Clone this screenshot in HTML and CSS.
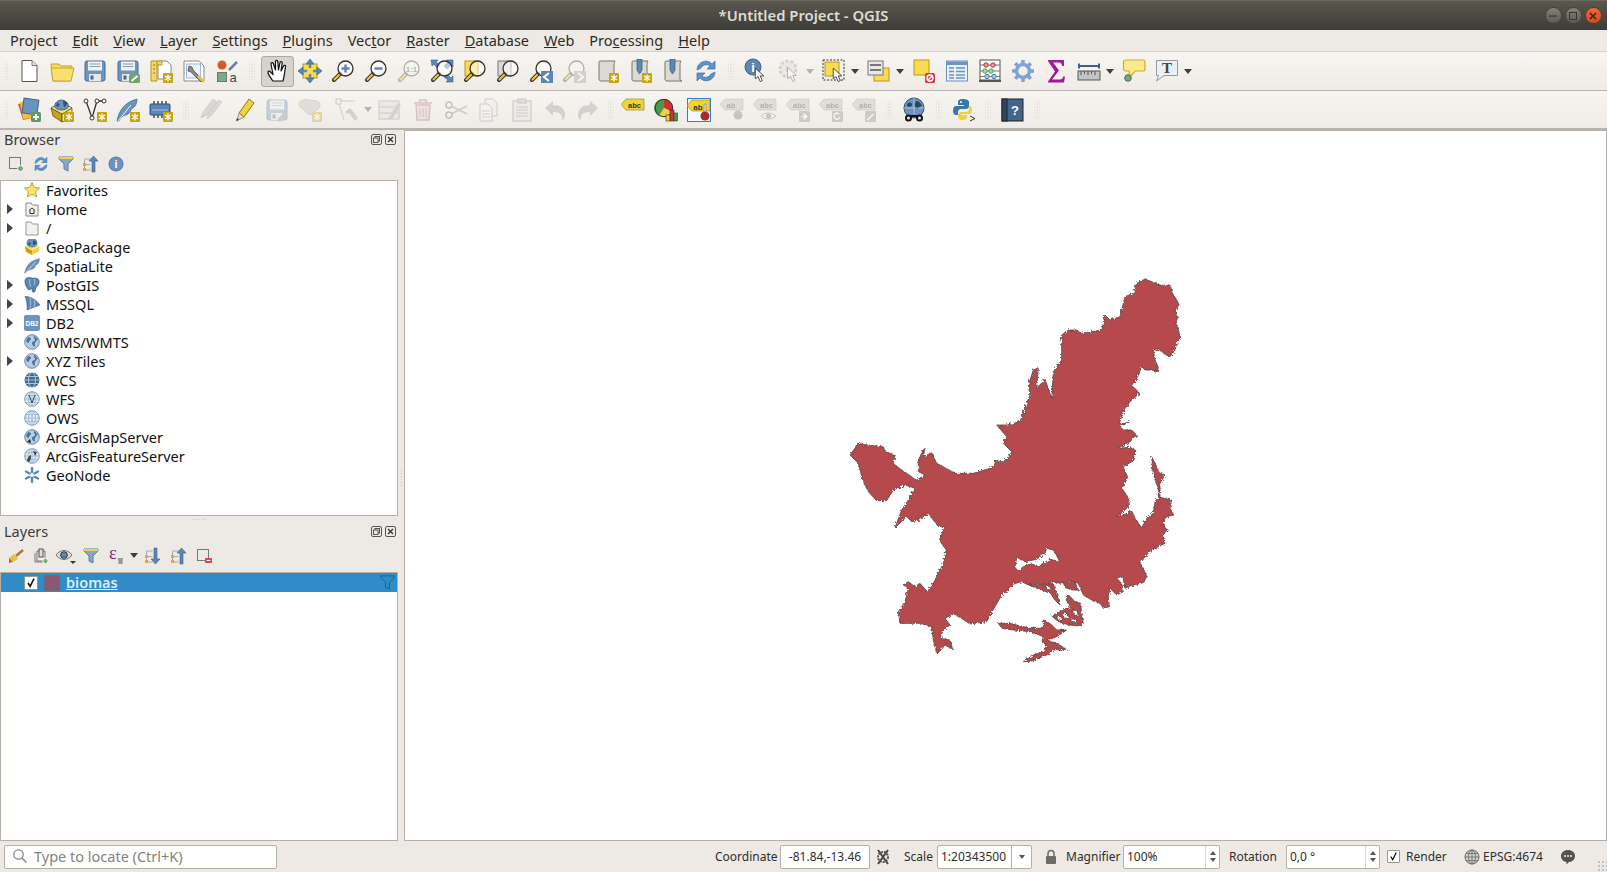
FILE: index.html
```html
<!DOCTYPE html>
<html lang="en">

<head>
  <title>*Untitled Project - QGIS</title>
  <meta charset="utf-8">
  <link rel="stylesheet" href="styles.css">
</head>

<body>
  <!-- shared icon parts -->
  <svg class="defs" width="0" height="0">
    <symbol id="mag" viewBox="0 0 24 24">
      <path d="M9 15l-6 6" stroke="#333" stroke-width="4" stroke-linecap="round" />
      <path d="M8 16l-4.500 4.500" stroke="#f0c82e" stroke-width="2.200" stroke-linecap="round" />
      <circle cx="14.500" cy="9.500" r="7.500" fill="#fff" fill-opacity=".55" stroke="#333" stroke-width="1.300" />
    </symbol>
    <symbol id="badge" viewBox="0 0 24 24">
      <rect x="14" y="14" width="10" height="10" rx="1" fill="#c9a411" />
      <path d="M19 15.500v7M16 17l6 4M22 17l-6 4" stroke="#fff" stroke-width="1.300" />
    </symbol>
    <symbol id="floppy" viewBox="0 0 24 24">
      <rect x="2" y="2" width="20" height="20" rx="2" fill="#6d95c2" stroke="#44688f" />
      <rect x="5" y="2.500" width="14" height="9" fill="#f2f2f2" />
      <path d="M6.500 5h11M6.500 7.500h11" stroke="#8a9db3" />
      <rect x="6" y="15" width="12" height="7" fill="#e8e8e8" />
      <rect x="7.500" y="16.500" width="3" height="4" fill="#44688f" />
    </symbol>
    <symbol id="scroll" viewBox="0 0 24 24">
      <path d="M5 2h15c-1 2-1 3-1 4v14c0 1 .500 2 2 2H6c-1.500 0-2-1-2-2V4c0-1 0-2 1-2z" fill="#dddad3" stroke="#77756f" />
    </symbol>
    <symbol id="pin" viewBox="0 0 24 24">
      <path d="M9 0h5v11l-2.500 4L9 11z" fill="#5f87b5" stroke="#3e5f86" stroke-width=".8" />
    </symbol>
    <symbol id="cursor" viewBox="0 0 24 24">
      <path d="M6 3v15l4-3 3 7 3-1.500-3-6.500h5z" fill="#fff" stroke="#333" stroke-width="1.200" stroke-linejoin="round" />
    </symbol>
    <symbol id="globe" viewBox="0 0 16 16">
      <circle cx="8" cy="8" r="7.300" fill="#b4cde6" stroke="#6a8bb0" stroke-width="1" />
      <path d="M4 3c2 0 3 1 3 2S5 6 5 8 3 8 2 7zM10 2c2 1 3 2 4 4-2 0-2 2-3 3s1 3-1 4c-1-2-2-2-2-4s3-1 3-3-2-2-1-4z" fill="#4f6f90" />
    </symbol>
    <symbol id="mesh" viewBox="0 0 16 16">
      <circle cx="8" cy="8" r="7.300" fill="#dbe7f3" stroke="#7d9cbd" />
      <path d="M.800 8h14.400M1.800 4.500h12.400M1.800 11.500h12.400M8 .800v14.400" stroke="#9bb7d4" stroke-width=".8" fill="none" />
      <ellipse cx="8" cy="8" rx="3.500" ry="7.200" fill="none" stroke="#9bb7d4" stroke-width=".8" />
    </symbol>
    <symbol id="tag" viewBox="0 0 24 24">
      <path d="M5 4h18v11H5L0 9.500z" fill="currentColor" stroke="#8a7a1a" stroke-width=".6" />
    </symbol>
  </svg>

  <div id="window">
    <header class="titlebar">
      <span class="title">*Untitled Project - QGIS</span>
      <div class="winbtns">
        <span class="winbtn"><svg width="16" height="16" viewBox="0 0 16 16"><path d="M4 8h8" stroke="#35342f" stroke-width="1.200" /></svg></span>
        <span class="winbtn"><svg width="16" height="16" viewBox="0 0 16 16"><rect x="4.500" y="4.500" width="7" height="7" fill="none" stroke="#35342f" /></svg></span>
        <span class="winbtn close"><svg width="16" height="16" viewBox="0 0 16 16"><path d="M5 5l6 6M11 5l-6 6" stroke="#3a1a0c" stroke-width="1.400" /></svg></span>
      </div>
    </header>

    <nav class="menubar">
      <span class="menu">Pro<u>j</u>ect</span>
      <span class="menu"><u>E</u>dit</span>
      <span class="menu"><u>V</u>iew</span>
      <span class="menu"><u>L</u>ayer</span>
      <span class="menu"><u>S</u>ettings</span>
      <span class="menu"><u>P</u>lugins</span>
      <span class="menu">Vec<u>t</u>or</span>
      <span class="menu"><u>R</u>aster</span>
      <span class="menu"><u>D</u>atabase</span>
      <span class="menu"><u>W</u>eb</span>
      <span class="menu">Pro<u>c</u>essing</span>
      <span class="menu"><u>H</u>elp</span>
    </nav>

    <div class="toolbar">
      <span class="handle first"></span>
      <span class="tb"><svg viewBox="0 0 24 24"><path d="M5 1.500h10l5 5v16H5z" fill="#fff" stroke="#555" /><path d="M15 1.500v5h5" fill="#e4e4e4" stroke="#777" /></svg></span>
      <span class="tb"><svg viewBox="0 0 24 24"><path d="M1 5h8l2 2h11l-2 15H3z" fill="#fadb5f" stroke="#c6a12f" /><path d="M1 9h23l-3 13H3z" fill="#fbdf6c" stroke="#c6a12f" /></svg></span>
      <span class="tb"><svg viewBox="0 0 24 24"><use href="#floppy" /></svg></span>
      <span class="tb"><svg viewBox="0 0 24 24"><use href="#floppy" /><rect x="13" y="15" width="11" height="9" rx="1.500" fill="#6fa56f" /><path d="M15.500 22l6-5" stroke="#fff" stroke-width="2" /></svg></span>
      <span class="tb"><svg viewBox="0 0 24 24"><path d="M9 2h9l4 4v14H9z" fill="#fff" stroke="#888" /><path d="M2 2h6v20H2z" fill="#f5d65f" stroke="#b8952b" /><path d="M8 2h5v4H8z" fill="#f5d65f" stroke="#b8952b" /><path d="M4 6h2M4 10h2M4 14h2" stroke="#8a7a1a" /><use href="#badge" /></svg></span>
      <span class="tb"><svg viewBox="0 0 24 24"><path d="M2 2h15l5 5v15H2z" fill="#fff" stroke="#888" /><rect x="4.500" y="5" width="14" height="14" fill="#eef3fa" stroke="#9db7d8" /><path d="M7 7l3 1 1 3 10 10-2 2L9 13l-3-1z" fill="#8a8a8a" stroke="#444" stroke-width=".7" /><path d="M16 17l6 6" stroke="#e6c42f" stroke-width="2.500" /></svg></span>
      <span class="tb"><svg viewBox="0 0 24 24"><circle cx="7" cy="6" r="4.500" fill="#d35a2a" /><path d="M14 11l8-8" stroke="#5b84b1" stroke-width="2.500" /><rect x="2.500" y="13.500" width="9" height="9" fill="#7fa98a" stroke="#5f7f6a" /><text class="glyph" x="14.500" y="23" font-size="13">a</text></svg></span>
      <span class="handle"></span>
      <span class="tb pressed"><svg viewBox="0 0 24 24"><path d="M7 22c-2-3-4-5-5-8-.500-1.500 1-2.500 2-1.500l3 3L5 5c-.300-1.500 1.800-2 2.300-.500L9.500 11 9.500 2.500c0-1.500 2.300-1.500 2.300 0L12.500 11l1.500-7.500c.300-1.500 2.400-1 2.200.500L15 12l2.500-5c.600-1.300 2.500-.600 2 .800C19 11 18.500 16 17 22z" fill="#fff" stroke="#111" stroke-width="1.200" stroke-linejoin="round" /></svg></span>
      <span class="tb"><svg viewBox="0 0 24 24"><rect x="5" y="5" width="14" height="14" fill="#f7dc4f" stroke="#b8952b" /><path d="M12 0l4 5H8zM12 24l-4-5h8zM0 12l5-4v8zM24 12l-5 4V8z" fill="#5b87b8" stroke="#3e5f86" stroke-width=".7" /><path d="M12 5v4M12 15v4M5 12h4M15 12h4" stroke="#5b87b8" stroke-width="2.500" /></svg></span>
      <span class="tb"><svg viewBox="0 0 24 24"><use href="#mag" /><path d="M14.500 5.500v8M10.500 9.500h8" stroke="#5b87b8" stroke-width="2.400" /></svg></span>
      <span class="tb"><svg viewBox="0 0 24 24"><use href="#mag" /><path d="M10.500 9.500h8" stroke="#5b87b8" stroke-width="2.400" /></svg></span>
      <span class="tb off"><svg viewBox="0 0 24 24"><use href="#mag" /><text class="glyph" x="14.500" y="12.500" font-size="8" text-anchor="middle" font-weight="700">1:1</text></svg></span>
      <span class="tb"><svg viewBox="0 0 24 24"><path d="M1 1h7L6 3l4 3-3 3-3-4-2 2zM23 1v7l-2-2-4 4-3-3 4-4-2-2zM23 23h-7l2-2-4-3 3-3 4 4 2-2z" fill="#5b87b8" stroke="#3e5f86" stroke-width=".6" /><use href="#mag" /></svg></span>
      <span class="tb"><svg viewBox="0 0 24 24"><rect x="2" y="2" width="13" height="15" fill="#f7dc4f" stroke="#b8952b" /><use href="#mag" /></svg></span>
      <span class="tb"><svg viewBox="0 0 24 24"><rect x="2" y="2" width="13" height="15" fill="#dddad3" stroke="#777" /><use href="#mag" /></svg></span>
      <span class="tb"><svg viewBox="0 0 24 24"><use href="#mag" /><rect x="12" y="12" width="12" height="12" fill="#5b87b8" /><path d="M20 14l-5 4 5 4" fill="none" stroke="#fff" stroke-width="2.200" /></svg></span>
      <span class="tb off"><svg viewBox="0 0 24 24"><use href="#mag" /><rect x="12" y="12" width="12" height="12" fill="#999" /><path d="M16 14l5 4-5 4" fill="none" stroke="#fff" stroke-width="2.200" /></svg></span>
      <span class="tb"><svg viewBox="0 0 24 24"><use href="#scroll" /><use href="#badge" /></svg></span>
      <span class="tb"><svg viewBox="0 0 24 24"><use href="#scroll" /><use href="#pin" /><use href="#badge" /></svg></span>
      <span class="tb"><svg viewBox="0 0 24 24"><use href="#scroll" /><use href="#pin" /></svg></span>
      <span class="tb"><svg viewBox="0 0 24 24"><path d="M3 11C3 5 9 1 14 2.500c2 .500 3 1.500 4 2.500l3-3v8h-8l3-3c-2-2-7-2-9 2zM21 13c0 6-6 10-11 8.500-2-.500-3-1.500-4-2.500l-3 3v-8h8l-3 3c2 2 7 2 9-2z" fill="#5b93cf" stroke="#3c6ea3" stroke-width=".7" /></svg></span>
      <span class="handle"></span>
      <span class="tb"><svg viewBox="0 0 24 24"><circle cx="9" cy="8" r="8" fill="#5b87b8" stroke="#40648c" /><text class="ilabel" x="9" y="13" font-size="13" text-anchor="middle">i</text><use href="#cursor" x="7" y="7" width="17" height="17" /></svg></span>
      <span class="tb drop off"><svg viewBox="0 0 24 24"><circle cx="11" cy="10" r="8" fill="#ddd" stroke="#999" stroke-width="3" stroke-dasharray="3 2" /><path d="M9 7l5 3-5 3z" fill="#999" /><use href="#cursor" x="6" y="6" width="18" height="18" /></svg><i class="tri"></i></span>
      <span class="tb drop"><svg viewBox="0 0 24 24"><rect x="1" y="1" width="21" height="20" fill="none" stroke="#333" stroke-dasharray="2 1.500" /><rect x="3" y="3" width="14" height="14" fill="#f7dc4f" stroke="#b8952b" /><use href="#cursor" x="7" y="7" width="17" height="17" /></svg><i class="tri"></i></span>
      <span class="tb drop"><svg viewBox="0 0 24 24"><rect x="7" y="9" width="15" height="13" fill="#f7dc4f" stroke="#b8952b" /><rect x="1" y="2" width="15" height="14" fill="#e8e8e8" stroke="#777" /><path d="M3 6h11M3 11h11" stroke="#777" stroke-width="2" /></svg><i class="tri"></i></span>
      <span class="tb"><svg viewBox="0 0 24 24"><rect x="2" y="1" width="15" height="15" fill="#f7dc4f" stroke="#b8952b" /><rect x="13" y="14" width="10" height="10" rx="1.500" fill="#d8404a" /><circle cx="18" cy="19" r="3" fill="none" stroke="#fff" stroke-width="1.300" /><path d="M16 21l4-4" stroke="#fff" stroke-width="1.300" /></svg></span>
      <span class="tb"><svg viewBox="0 0 24 24"><rect x="1.500" y="2" width="21" height="20" fill="#e8f0f8" stroke="#6c93bf" /><rect x="2" y="2.500" width="20" height="3.500" fill="#6c93bf" /><path d="M4 9h5M11 9h9M4 12.500h5M11 12.500h9M4 16h5M11 16h9M4 19h5M11 19h9" stroke="#6c93bf" stroke-width="1.300" /></svg></span>
      <span class="tb"><svg viewBox="0 0 24 24"><rect x="2" y="1" width="20" height="20" fill="#fff" stroke="#555" /><path d="M1 22h22" stroke="#555" stroke-width="2" /><path d="M2 6h20M2 12h20M2 17.500h20" stroke="#777" /><circle cx="8" cy="6" r="2.200" fill="#e3a0a0" stroke="#b33" /><circle cx="15" cy="6" r="2.200" fill="#e3a0a0" stroke="#b33" /><circle cx="7" cy="12" r="2.200" fill="#a9d4a9" stroke="#4a4" /><circle cx="13" cy="12" r="2.200" fill="#a9d4a9" stroke="#4a4" /><circle cx="9" cy="17.500" r="2.200" fill="#a9c6e4" stroke="#47a" /><circle cx="16" cy="17.500" r="2.200" fill="#a9c6e4" stroke="#47a" /></svg></span>
      <span class="tb"><svg viewBox="0 0 24 24"><circle cx="12" cy="12" r="6.500" fill="none" stroke="#7fa3d6" stroke-width="3.500" /><path d="M12 1v5M12 18v5M1 12h5M18 12h5M4.200 4.200l3.500 3.500M16.300 16.300l3.500 3.500M19.800 4.200l-3.500 3.500M7.700 16.300l-3.500 3.500" stroke="#7fa3d6" stroke-width="3.500" /></svg></span>
      <span class="tb"><svg viewBox="0 0 24 24"><path d="M4 1h16v6h-2c0-2-1-3.500-3-3.500H9l6 8-7 9h8c2 0 3-1 3-3h2l-1 6H4v-1l7-10L4 2z" fill="#a01a9c" /></svg></span>
      <span class="tb drop"><svg viewBox="0 0 24 24"><path d="M2 7h20M2 4.500v5M22 4.500v5" stroke="#3e5f86" stroke-width="2" /><rect x="1" y="12" width="22" height="9" fill="#c4c4c4" stroke="#555" /><path d="M4 12v4M7.500 12v3M11 12v4M14.500 12v3M18 12v4" stroke="#555" /></svg><i class="tri"></i></span>
      <span class="tb"><svg viewBox="0 0 24 24"><path d="M4 1h17c1.500 0 2 1 2 2v7c0 1.500-1 2-2 2h-8l-5 6-1-6H4c-1.500 0-2.500-1-2.500-2V3C1.500 2 2.500 1 4 1z" fill="#fbeb8e" stroke="#cfa92c" stroke-width="1.200" /><circle cx="6" cy="19" r="3.300" fill="#7aa67a" stroke="#4f6f4f" /></svg></span>
      <span class="tb drop"><svg viewBox="0 0 24 24"><path d="M1.500 1.500h21v15H9L1.500 22l2-5.500h-2z" fill="#eaf0f6" stroke="#9a9a9a" /><text class="tglyph" x="12" y="13.500" font-size="15" text-anchor="middle">T</text></svg><i class="tri"></i></span>
    </div>

    <div class="toolbar second">
      <span class="handle first"></span>
      <span class="tb"><svg viewBox="0 0 24 24"><path d="M1 6l9-2 5 16-9 2z" fill="#d8633a" /><path d="M3 4l9-1 3 17-9 1z" fill="#f1c232" /><rect x="6" y="1" width="15" height="15" fill="#6c93bf" stroke="#40648c" transform="rotate(8 13 8)" /><rect x="14" y="14" width="10" height="10" rx="1.500" fill="#5f9a6f" /><path d="M19 16v6M16 19h6" stroke="#fff" stroke-width="1.800" /></svg></span>
      <span class="tb"><svg viewBox="0 0 24 24"><path d="M1 10l11 6v8L3 18z" fill="#c9a411" stroke="#4a4010" stroke-width=".7" /><path d="M12 16l10-6v10l-10 4z" fill="#f2e27a" stroke="#4a4010" stroke-width=".7" /><path d="M1 10l11 6 10-6-5-3H6z" fill="#f4e48d" stroke="#4a4010" stroke-width=".7" /><path d="M4.500 9a7 7 0 1 1 14 0c-2 2-4 3-7 3s-5-1-7-3z" fill="#6c93bf" stroke="#40648c" /><path d="M7 5c3 0 3 2 2 3s-2 1-3 0zM13 3c2 0 4 1 5 3-2 0-2 2-3 3s-2-4-2-6z" fill="#34526f" /><use href="#badge" /></svg></span>
      <span class="tb"><svg viewBox="0 0 24 24"><path d="M3 3l6 17 5-17h7" fill="none" stroke="#333" stroke-width="1.300" /><circle cx="3" cy="3" r="2" fill="#fff" stroke="#333" /><circle cx="9" cy="20" r="2" fill="#fff" stroke="#333" /><circle cx="14" cy="3" r="2" fill="#fff" stroke="#333" /><circle cx="21" cy="3" r="2" fill="#fff" stroke="#333" /><use href="#badge" /></svg></span>
      <span class="tb"><svg viewBox="0 0 24 24"><path d="M1 23C3 12 9 4 21 1c0 6-3 9-6 10 0 3-3 6-6 6-2 1-4 2-6 6z" fill="#6c93bf" stroke="#40648c" stroke-width=".7" /><path d="M2 23L15 7" stroke="#e8eef5" /><use href="#badge" /></svg></span>
      <span class="tb"><svg viewBox="0 0 24 24"><rect x="1" y="6" width="20" height="11" rx="1" fill="#5b87b8" stroke="#2f4d70" /><path d="M5 3v3M9 3v3M13 3v3M17 3v3M5 17v3M9 17v3M13 17v3M17 17v3" stroke="#444" stroke-width="1.400" /><path d="M3 12h16" stroke="#a8c4e0" /><use href="#badge" /></svg></span>
      <span class="handle"></span>
      <span class="tb off"><svg viewBox="0 0 24 24"><path d="M2 20l2-6L14 1l4 3L8 17zM8 21l2-6L20 2l3 2-10 13z" fill="#aaa" stroke="#777" stroke-width=".6" /></svg></span>
      <span class="tb"><svg viewBox="0 0 24 24"><path d="M7 15L17 1l5 4L12 19z" fill="#f1d13f" stroke="#8b7a22" /><path d="M7 15l5 4-7 4z" fill="#eed9b5" stroke="#777" stroke-width=".7" /><path d="M5 20l2 1.500L4 23z" fill="#333" /></svg></span>
      <span class="tb off"><svg viewBox="0 0 24 24"><use href="#floppy" /><path d="M12 22l8-9 3 3-8 8z" fill="#888" /></svg></span>
      <span class="tb off"><svg viewBox="0 0 24 24"><path d="M1 6c0-4 5-5 10-4s11 0 11 5c0 4-4 5-6 8-2 2-6 2-8-1S1 10 1 6z" fill="#bbb" stroke="#999" /><use href="#badge" /></svg></span>
      <span class="tb drop wide off"><svg viewBox="0 0 24 24"><rect x="1" y="1" width="5" height="5" fill="none" stroke="#777" /><path d="M4 6l5 16M6 3h14" stroke="#888" /><path d="M11 13l4-3 2 2 6 8-3 3-6-8-3 1z" fill="#999" /></svg><i class="tri"></i></span>
      <span class="tb off"><svg viewBox="0 0 24 24"><rect x="1" y="3" width="20" height="18" fill="#ddd" stroke="#888" /><path d="M1 9h20M1 15h20" stroke="#888" /><path d="M10 21L20 5l3 2-9 14z" fill="#999" /></svg></span>
      <span class="tb off"><svg viewBox="0 0 24 24"><path d="M3 5h18M9 5V2h6v3" fill="none" stroke="#a86a6a" stroke-width="1.600" /><path d="M5 7h14l-1 15H6z" fill="#e0c8c8" stroke="#a86a6a" stroke-width="1.400" /><path d="M9 10v9M12 10v9M15 10v9" stroke="#a86a6a" /></svg></span>
      <span class="tb off"><svg viewBox="0 0 24 24"><circle cx="5" cy="7" r="3" fill="none" stroke="#666" stroke-width="1.500" /><circle cx="5" cy="17" r="3" fill="none" stroke="#666" stroke-width="1.500" /><path d="M7 8l16 8M7 16l16-8" stroke="#888" stroke-width="1.600" /></svg></span>
      <span class="tb off"><svg viewBox="0 0 24 24"><path d="M8 1h8l4 4v13H8z" fill="#eee" stroke="#888" /><path d="M3 6h8l4 4v13H3z" fill="#f6f6f6" stroke="#888" /><path d="M5 13h8M5 16h8M5 19h8" stroke="#999" /></svg></span>
      <span class="tb off"><svg viewBox="0 0 24 24"><rect x="3" y="3" width="18" height="20" fill="#e4e4e4" stroke="#777" /><rect x="8" y="1" width="8" height="4" fill="#bbb" stroke="#777" /><path d="M6 9h12M6 12h12M6 15h12M6 18h12" stroke="#888" /></svg></span>
      <span class="tb off"><svg viewBox="0 0 24 24"><path d="M2 10l8-7v4c8 0 12 4 12 10 0 2-1 4-3 5 1-6-3-8-9-8v4z" fill="#999" /></svg></span>
      <span class="tb off"><svg viewBox="0 0 24 24"><path d="M22 10l-8-7v4C6 7 2 11 2 17c0 2 1 4 3 5-1-6 3-8 9-8v4z" fill="#999" /></svg></span>
      <span class="handle narrow"></span>
      <span class="tb yellow"><svg viewBox="0 0 24 24"><use href="#tag" y="-3" /><text class="ilabel dark" x="13.500" y="10" font-size="7.500" text-anchor="middle" font-weight="700">abc</text></svg></span>
      <span class="tb"><svg viewBox="0 0 24 24"><path d="M10 10V1a9 9 0 0 1 8 13z" fill="#c9352c" /><path d="M10 10l8 4a9 9 0 0 1-13 4z" fill="#f1d13f" /><path d="M10 10L5 18A9 9 0 0 1 10 1z" fill="#4c9a4c" /><circle cx="10" cy="10" r="8.700" fill="none" stroke="#333" /><rect x="12" y="17" width="4" height="6" fill="#f1d13f" stroke="#333" stroke-width=".6" /><rect x="16" y="12" width="4" height="11" fill="#c9352c" stroke="#333" stroke-width=".6" /><rect x="20" y="15" width="3.500" height="8" fill="#4c9a4c" stroke="#333" stroke-width=".6" /></svg></span>
      <span class="tb yellow"><svg viewBox="0 0 24 24"><rect x=".5" y=".5" width="23" height="23" fill="#f4f8fc" stroke="#2f7fd6" /><use href="#tag" y="-2" /><text class="ilabel dark" x="11" y="11.500" font-size="8" text-anchor="middle" font-weight="700">ab</text><path d="M17 6h2v9h-2z" fill="#ddd" stroke="#777" stroke-width=".5" /><circle cx="18" cy="18" r="4.500" fill="#a82a2a" /></svg></span>
      <span class="tb off grey"><svg viewBox="0 0 24 24"><use href="#tag" y="-3" /><text class="ilabel dark" x="11" y="10" font-size="7.500" text-anchor="middle">ab</text><path d="M17 4h2v9h-2z" fill="#ddd" stroke="#777" stroke-width=".5" /><circle cx="18" cy="17" r="4.500" fill="#777" /></svg></span>
      <span class="tb off grey"><svg viewBox="0 0 24 24"><use href="#tag" y="-3" /><text class="ilabel dark" x="13.500" y="10" font-size="7.500" text-anchor="middle">abc</text><path d="M8 18c3-4 11-4 15 0-4 4-12 4-15 0z" fill="#eee" stroke="#777" /><circle cx="15.500" cy="18" r="2.500" fill="#777" /></svg></span>
      <span class="tb off grey"><svg viewBox="0 0 24 24"><use href="#tag" y="-3" /><text class="ilabel dark" x="13.500" y="10" font-size="7.500" text-anchor="middle">abc</text><rect x="13" y="13" width="11" height="11" rx="1" fill="#888" /><path d="M15 18.500h4M18 15.500l3.500 3-3.500 3z" stroke="#fff" fill="#fff" /></svg></span>
      <span class="tb off grey"><svg viewBox="0 0 24 24"><use href="#tag" y="-3" /><text class="ilabel dark" x="13.500" y="10" font-size="7.500" text-anchor="middle">abc</text><rect x="13" y="13" width="11" height="11" rx="1" fill="#888" /><path d="M21 18.500a3 3 0 1 1-1-2.500" stroke="#fff" fill="none" stroke-width="1.400" /></svg></span>
      <span class="tb off grey"><svg viewBox="0 0 24 24"><use href="#tag" y="-3" /><text class="ilabel dark" x="13.500" y="10" font-size="7.500" text-anchor="middle">abc</text><rect x="13" y="13" width="11" height="11" rx="1" fill="#888" /><path d="M15.500 22l6-6" stroke="#fff" stroke-width="1.600" /></svg></span>
      <span class="handle"></span>
      <span class="tb"><svg viewBox="0 0 24 24"><circle cx="12" cy="10" r="10" fill="#6c93bf" stroke="#33506e" /><path d="M5 6c3-3 5-1 5 1s-3 2-5 1zM14 3c3 0 5 2 6 5-3 0-3 3-5 3s-3-5-1-8z" fill="#2d4763" /><path d="M2 10h20M12 0v16" stroke="#c5d6e8" stroke-width=".7" /><path d="M9 18h6" stroke="#111" stroke-width="2" /><circle cx="6.500" cy="20" r="3.500" fill="#111" /><circle cx="17.500" cy="20" r="3.500" fill="#111" /><circle cx="6.500" cy="20" r="1.500" fill="#e9e9e9" /><circle cx="17.500" cy="20" r="1.500" fill="#e9e9e9" /></svg></span>
      <span class="handle"></span>
      <span class="tb"><svg viewBox="0 0 24 24"><path d="M11 1c-4 0-5 1.500-5 3v3h6v1H4C2 8 1 10 1 12.500S2 17 4 17h2v-3c0-2 1.500-3 3-3h5c1.500 0 3-1 3-3V4c0-2-3-3-6-3z" fill="#3a76a8" /><path d="M10 22c4 0 5-1.500 5-3v-2H9v-1h8c2 0 3-2 3-4.500S19 8 17.500 8H17v3c0 2-1.500 3-3 3H9c-1.500 0-3 1-3 3v2c0 2 2 3 4 3z" fill="#f2d23c" /><circle cx="9" cy="4" r="1" fill="#fff" /><path d="M18 18l5 2.500-5 2.500" fill="none" stroke="#333" /></svg></span>
      <span class="handle tight"></span>
      <span class="tb"><svg viewBox="0 0 24 24"><rect x="2" y="1" width="21" height="22" fill="#42658c" stroke="#222" /><rect x="2" y="1" width="5" height="22" fill="#2c4766" stroke="#222" /><text class="ilabel" x="15" y="17" font-size="13" text-anchor="middle" font-weight="400">?</text></svg></span>
      <span class="handle"></span>
    </div>

    <div class="main">
      <aside class="side">
        <section class="panel browser">
          <div class="dock-title">
            <span>Browser</span>
            <span class="dock-btns">
              <svg viewBox="0 0 11 11"><rect x=".5" y=".5" width="10" height="10" rx="1.500" fill="none" stroke="#555" /><rect x="4" y="2.500" width="4.500" height="4.500" fill="none" stroke="#555" /><rect x="2.500" y="4" width="4.500" height="4.500" fill="#edeae5" stroke="#555" /></svg>
              <svg viewBox="0 0 11 11"><rect x=".5" y=".5" width="10" height="10" rx="1.500" fill="none" stroke="#555" /><path d="M3 3l5 5M8 3l-5 5" stroke="#333" stroke-width="1.400" /></svg>
            </span>
          </div>
          <div class="dock-tools">
            <span class="dt"><svg viewBox="0 0 16 16"><rect x="1.500" y="1.500" width="11" height="11" fill="none" stroke="#777" /><circle cx="12.500" cy="12.500" r="3" fill="#74ab74" stroke="#fff" /></svg></span>
            <span class="dt"><svg viewBox="0 0 24 24"><path d="M3 11C3 5 9 1 14 2.500c2 .500 3 1.500 4 2.500l3-3v8h-8l3-3c-2-2-7-2-9 2zM21 13c0 6-6 10-11 8.500-2-.500-3-1.500-4-2.500l-3 3v-8h8l-3 3c2 2 7 2 9-2z" fill="#5b93cf" stroke="#3c6ea3" stroke-width=".7" /></svg></span>
            <span class="dt"><svg viewBox="0 0 16 16"><path d="M1 1h14v2L10 8v7l-4-2V8L1 3z" fill="#88a6c6" stroke="#5f7fa6" /><path d="M1 1h14v2H1z" fill="#f1d13f" /></svg></span>
            <span class="dt"><svg viewBox="0 0 16 16"><path d="M1.500 3h6M1.500 3v11h6M1.500 8.500h6" fill="none" stroke="#aaa" /><rect x="0" y="7" width="3" height="3" fill="#e8a33a" /><rect x="0" y="12" width="3" height="3" fill="#e8a33a" /><path d="M10.500 0l4.500 5h-3v11h-3V5H6z" fill="#5b87b8" stroke="#3e5f86" stroke-width=".6" /></svg></span>
            <span class="dt"><svg viewBox="0 0 16 16"><circle cx="8" cy="8" r="7" fill="#6c93bf" stroke="#4d739c" /><text class="ilabel" x="8" y="12" font-size="11" text-anchor="middle">i</text></svg></span>
          </div>
          <div class="tree">
            <div class="row"><i class="arrow none"></i><svg class="ti" viewBox="0 0 16 16"><path d="M8 .500l2.300 5 5.200.600-3.900 3.500 1.100 5.400L8 12.200 3.300 15l1.100-5.400L.500 6.100l5.200-.600z" fill="#fbe56f" stroke="#b8a33a" /></svg><span>Favorites</span></div>
            <div class="row"><i class="arrow"></i><svg class="ti" viewBox="0 0 16 16"><path d="M2 2h5l1.500 2H14v11H2z" fill="#f2f1ee" stroke="#888" /><path d="M5 9.500L8 7l3 2.500M6 9v3.500h4V9" fill="none" stroke="#333" /></svg><span>Home</span></div>
            <div class="row"><i class="arrow"></i><svg class="ti" viewBox="0 0 16 16"><path d="M2 2h5l1.500 2H14v11H2z" fill="#f2f1ee" stroke="#999" /></svg><span>/</span></div>
            <div class="row"><i class="arrow none"></i><svg class="ti" viewBox="0 0 24 24"><path d="M1 11l11 6v7L3 19z" fill="#c9a411" /><path d="M12 17l11-6v7l-11 6z" fill="#f2d23c" /><path d="M1 11l11 6 11-6-6-4H7z" fill="#f4e48d" /><path d="M5 9a7.500 7.500 0 1 1 14 0c-2 2-4 3-7 3s-5-1-7-3z" fill="#6c93bf" stroke="#40648c" /><path d="M8 5c3 0 2 3 1 4s-3 0-3-1zM14 2c2 1 4 2 5 4-2 0-2 3-4 3s-2-4-1-7z" fill="#34526f" /></svg><span>GeoPackage</span></div>
            <div class="row"><i class="arrow none"></i><svg class="ti" viewBox="0 0 24 24"><path d="M1 23C3 12 9 4 23 1c0 6-3 9-6 10 0 3-3 6-6 6-3 1-6 2-10 6z" fill="#6c93bf" stroke="#40648c" stroke-width=".7" /><path d="M2 23L17 6" stroke="#e8eef5" /></svg><span>SpatiaLite</span></div>
            <div class="row"><i class="arrow"></i><svg class="ti" viewBox="0 0 16 16"><path d="M1 4c0-3 3-4 6-3l2 .500c3-1 6 0 6 3 0 2-1 4-2 5l-1 .500c-1 1 0 4-2 5s-2-2-2-4c-2 1-3 3-4 1S1 8 1 4z" fill="#5b87b8" stroke="#2f4d70" stroke-width=".8" /><path d="M6 2c-1 3 0 6 1 8M10 2c1 2 1 4 0 6" fill="none" stroke="#c5d6e8" stroke-width=".7" /></svg><span>PostGIS</span></div>
            <div class="row"><i class="arrow"></i><svg class="ti" viewBox="0 0 16 16"><path d="M1 0c5 1 11 3 15 9-4 2-9 3-13 5 .500-5-.500-10-2-14z" fill="#5b87b8" stroke="#40648c" stroke-width=".6" /><path d="M6 2c1 3 1 7 0 10M10 4c1 2 1 5 0 7" stroke="#a9c6e4" fill="none" /></svg><span>MSSQL</span></div>
            <div class="row"><i class="arrow"></i><svg class="ti" viewBox="0 0 16 16"><rect width="16" height="16" rx="2" fill="#6c93bf" /><text class="ilabel" x="8" y="10.500" font-size="6.500" text-anchor="middle" font-weight="400">DB2</text></svg><span>DB2</span></div>
            <div class="row"><i class="arrow none"></i><svg class="ti" viewBox="0 0 16 16"><use href="#globe" /></svg><span>WMS/WMTS</span></div>
            <div class="row"><i class="arrow"></i><svg class="ti" viewBox="0 0 16 16"><use href="#globe" /></svg><span>XYZ Tiles</span></div>
            <div class="row"><i class="arrow none"></i><svg class="ti" viewBox="0 0 16 16"><circle cx="8" cy="8" r="7.500" fill="#44688f" /><path d="M.500 8h15M1.500 4.500h13M1.500 11.500h13" stroke="#c5d6e8" stroke-width=".8" /><ellipse cx="8" cy="8" rx="3.500" ry="7.500" fill="none" stroke="#c5d6e8" stroke-width=".8" /></svg><span>WCS</span></div>
            <div class="row"><i class="arrow none"></i><svg class="ti" viewBox="0 0 16 16"><use href="#mesh" /><path d="M5 4l3 8 3-8" fill="none" stroke="#444" /></svg><span>WFS</span></div>
            <div class="row"><i class="arrow none"></i><svg class="ti" viewBox="0 0 16 16"><use href="#mesh" /></svg><span>OWS</span></div>
            <div class="row"><i class="arrow none"></i><svg class="ti" viewBox="0 0 16 16"><use href="#globe" /><path d="M3 13l3-3 1 4z" fill="#222" /></svg><span>ArcGisMapServer</span></div>
            <div class="row"><i class="arrow none"></i><svg class="ti" viewBox="0 0 16 16"><use href="#mesh" /><path d="M3 13c1-4 2-5 4-6 0 3 0 5-2 7zM9 3l4 1-2 4z" fill="#444" /></svg><span>ArcGisFeatureServer</span></div>
            <div class="row"><i class="arrow none"></i><svg class="ti" viewBox="0 0 16 16"><path d="M8 1v14M2 4.500l12 7M14 4.500l-12 7" stroke="#5b87b8" stroke-width="2.400" stroke-linecap="round" /><circle cx="8" cy="8" r="2" fill="#fff" /></svg><span>GeoNode</span></div>
          </div>
        </section>

        <div class="splitter"></div>

        <section class="panel layers">
          <div class="dock-title">
            <span>Layers</span>
            <span class="dock-btns">
              <svg viewBox="0 0 11 11"><rect x=".5" y=".5" width="10" height="10" rx="1.500" fill="none" stroke="#555" /><rect x="4" y="2.500" width="4.500" height="4.500" fill="none" stroke="#555" /><rect x="2.500" y="4" width="4.500" height="4.500" fill="#edeae5" stroke="#555" /></svg>
              <svg viewBox="0 0 11 11"><rect x=".5" y=".5" width="10" height="10" rx="1.500" fill="none" stroke="#555" /><path d="M3 3l5 5M8 3l-5 5" stroke="#333" stroke-width="1.400" /></svg>
            </span>
          </div>
          <div class="dock-tools">
            <span class="dt"><svg viewBox="0 0 16 16"><path d="M1 10l5-4 4 5-5 3z" fill="#e4c53a" /><path d="M1 10l4 4-4 1z" fill="#d8534a" /><path d="M8 8l7-6" stroke="#a8793a" stroke-width="2.500" /></svg></span>
            <span class="dt"><svg viewBox="0 0 16 16"><path d="M4 3h8v10H4z" fill="#eee" stroke="#777" /><rect x="6" y="1" width="4" height="8" fill="#ddd" stroke="#555" /><path d="M2 5v9h8" fill="none" stroke="#777" /><circle cx="12.500" cy="13" r="2.700" fill="#74ab74" stroke="#fff" /></svg></span>
            <span class="dt eye"><svg viewBox="0 0 20 16"><path d="M0 7c4-6 12-6 16 0-4 6-12 6-16 0z" fill="#d9d9d9" stroke="#777" /><circle cx="8" cy="7" r="3.300" fill="#5b87b8" stroke="#333" /><path d="M14 13h6l-3 3z" fill="#333" /></svg></span>
            <span class="dt"><svg viewBox="0 0 16 16"><path d="M1 1h14v2L10 8v7l-4-2V8L1 3z" fill="#88a6c6" stroke="#5f7fa6" /><path d="M1 1h14v2H1z" fill="#f1d13f" /></svg></span>
            <span class="dt drop"><svg viewBox="0 0 16 16"><text class="eps" x="0" y="11" font-size="18">&#949;</text><path d="M9 10h5l-.500 6h-4z" fill="#999" /></svg><i class="tri"></i></span>
            <span class="dt"><svg viewBox="0 0 16 16"><path d="M1.500 3h6M1.500 3v11h6M1.500 8.500h6" fill="none" stroke="#aaa" /><rect x="0" y="7" width="3" height="3" fill="#e8a33a" /><rect x="0" y="12" width="3" height="3" fill="#e8a33a" /><path d="M10.500 16L15 11h-3V0H9v11H6z" fill="#5b87b8" stroke="#3e5f86" stroke-width=".6" /></svg></span>
            <span class="dt"><svg viewBox="0 0 16 16"><path d="M1.500 3h6M1.500 3v11h6M1.500 8.500h6" fill="none" stroke="#aaa" /><rect x="0" y="7" width="3" height="3" fill="#e8a33a" /><rect x="0" y="12" width="3" height="3" fill="#e8a33a" /><path d="M10.500 0l4.500 5h-3v11h-3V5H6z" fill="#5b87b8" stroke="#3e5f86" stroke-width=".6" /></svg></span>
            <span class="dt"><svg viewBox="0 0 16 16"><rect x="1.500" y="1.500" width="11" height="11" fill="none" stroke="#777" /><rect x="9" y="10" width="7" height="5" rx="1" fill="#d8404a" /><path d="M10.500 12.500h4" stroke="#fff" stroke-width="1.200" /></svg></span>
          </div>
          <div class="tree layertree">
            <div class="layer">
              <span class="check"><svg viewBox="0 0 14 14"><path d="M3.500 7l2.500 4 4.500-9" fill="none" stroke="#111" stroke-width="1.800" /></svg></span>
              <span class="swatch"></span>
              <span class="lname">biomas</span>
              <svg class="lfilter" viewBox="0 0 16 16"><path d="M1 1h14v2L10 8v7l-4-2V8L1 3z" fill="none" stroke="#1c5f8e" /></svg>
            </div>
          </div>
        </section>
      </aside>

      <div class="vsplit"></div>

      <div class="canvas">
        <svg class="map" viewBox="0 0 1110 1260">
          <defs>
            <filter id="rough" x="-5%" y="-5%" width="110%" height="110%">
              <feTurbulence type="fractalNoise" baseFrequency=".16" numOctaves="2" seed="4" />
              <feDisplacementMap in="SourceGraphic" scale="13" />
            </filter>
          </defs>
          <g filter="url(#rough)" fill="#b5484c" stroke="#4b4648" stroke-width="2.400" fill-rule="evenodd">
            <path d="M945 57L965 65 990 75 1022 77 1025 95 1040 120 1048 135 1035 150 1043 170 1038 190 1045 210 1052 228 1042 245 1035 270 1020 290 1005 283 990 270 970 270 975 300 985 322 982 335 965 330 945 330 935 320 925 345 915 365 902 375 915 385 928 400 915 412 900 425 885 445 875 470 868 490 885 490 900 485 870 500 880 510 905 510 920 525 900 545 880 555 865 565 900 562 918 570 912 590 905 605 880 620 885 635 893 650 885 670 875 685 890 705 900 725 890 745 862 770 880 765 905 752 915 775 935 803 950 775 970 760 975 725 985 712 985 685 975 660 968 630 965 590 975 610 985 635 1005 645 990 670 990 712 1025 720 1020 745 1032 765 1010 770 998 785 1005 805 1012 808 1000 825 1005 850 985 860 965 868 950 885 930 910 945 935 950 950 940 968 900 978 885 985 878 948 860 955 875 970 880 995 860 1005 840 985 835 1010 838 1040 820 1045 810 1030 780 1018 760 1005 745 970 720 962 690 970 670 965 650 975 620 970 595 975 575 965 550 972 540 985 515 1005 495 1040 470 1085 420 1092 395 1075 370 1062 345 1075 360 1095 340 1110 330 1135 360 1140 368 1168 345 1155 322 1182 310 1140 305 1100 270 1090 210 1090 205 1055 225 1025 235 985 220 975 235 965 255 980 270 970 292 995 315 960 340 910 348 870 328 840 345 800 325 800 295 760 270 780 245 785 230 770 195 803 215 750 235 720 255 685 225 675 190 690 170 722 140 722 115 695 100 665 90 630 85 610 60 585 85 550 110 555 160 560 165 575 195 585 190 610 215 630 245 650 260 660 285 645 265 635 265 600 280 570 285 565 280 590 305 578 320 610 340 620 375 640 430 640 480 625 505 600 490 605 520 605 535 590 545 575 520 550 530 530 500 495 530 495 570 485 590 430 600 405 595 375 610 330 625 325 620 385 645 358 665 415 670 335 695 300 695 225 715 210 740 210 755 220 815 210 825 165 840 180 870 170 885 110 910 100 920 70z
              M560 892L585 905 620 898 645 880 650 865 670 870 690 905 660 898 640 910 620 920 605 910 580 920 565 932 555 925z" />
            <path d="M505 1090L540 1090 600 1105 640 1105 640 1080 660 1090 680 1110 710 1110 680 1130 650 1140 680 1150 710 1168 670 1170 650 1185 600 1205 580 1205 610 1185 640 1175 650 1155 635 1145 640 1130 600 1115 550 1110 515 1105z" />
            <path d="M665 1068L700 1050 722 1042 708 1020 716 1005 735 1025 752 1030 756 1070 760 1090 745 1098 720 1095 690 1088z
              M698 1062L712 1058 716 1072 703 1076z M728 1050L742 1052 744 1066 731 1064z M722 1078L738 1076 740 1088 726 1088z M680 1072L692 1068 695 1080 684 1080z" />
            <path d="M595 975L640 972 670 972 680 1000 690 1035 675 1020 660 998 640 992 620 985z M645 980L660 980 664 990 650 988z" />
            <path d="M700 968L735 966 745 990 725 990 705 982z" />
          </g>
        </svg>
      </div>
    </div>

    <footer class="statusbar">
      <div class="locator">
        <svg viewBox="0 0 16 16"><circle cx="6.500" cy="6.500" r="4.700" fill="none" stroke="#888" stroke-width="1.300" /><path d="M10 10l4.500 4.500" stroke="#888" stroke-width="1.500" /></svg>
        <span>Type to locate (Ctrl+K)</span>
      </div>
      <span class="st lbl-coord">Coordinate</span>
      <span class="field coord">-81.84,-13.46</span>
      <svg class="sicon toggle" viewBox="0 0 16 16"><path d="M3 1l10 14M13 1L3 15" stroke="#444" stroke-width="2" /><circle cx="8" cy="8" r="5" fill="none" stroke="#555" stroke-width="2" stroke-dasharray="2 1" /></svg>
      <span class="st lbl-scale">Scale</span>
      <span class="field combo">1:20343500<i class="combo-btn"><i class="tri small"></i></i></span>
      <svg class="sicon lock" viewBox="0 0 16 16"><path d="M5 7V4.500a3 3 0 0 1 6 0V7" fill="none" stroke="#6d6b66" stroke-width="1.500" /><rect x="3" y="7" width="10" height="8" rx="1" fill="#6d6b66" /></svg>
      <span class="st lbl-mag">Magnifier</span>
      <span class="field spin mag">100%<i class="spin-btn"><b class="up"></b><b class="down"></b></i></span>
      <span class="st lbl-rot">Rotation</span>
      <span class="field spin rot">0,0 °<i class="spin-btn"><b class="up"></b><b class="down"></b></i></span>
      <span class="check small"><svg viewBox="0 0 14 14"><path d="M3.500 7l2.500 4 4.500-9" fill="none" stroke="#111" stroke-width="1.600" /></svg></span>
      <span class="st lbl-render">Render</span>
      <svg class="sicon crs" viewBox="0 0 16 16"><circle cx="8" cy="8" r="7" fill="#d5d3ce" stroke="#666" /><path d="M1 8h14M2 4.500h12M2 11.500h12M8 1v14" stroke="#666" stroke-width=".8" /><ellipse cx="8" cy="8" rx="3.500" ry="7" fill="none" stroke="#666" stroke-width=".8" /></svg>
      <span class="st lbl-epsg">EPSG:4674</span>
      <svg class="sicon msg" viewBox="0 0 16 16"><path d="M8 1c4 0 7 2.500 7 6s-3 6-6 6l-2.500 2.500V13C3 12.500 1 10 1 7c0-3.500 3-6 7-6z" fill="#55534e" /><circle cx="5" cy="7" r="1" fill="#eee" /><circle cx="8" cy="7" r="1" fill="#eee" /><circle cx="11" cy="7" r="1" fill="#eee" /></svg>
      <span class="grip"></span>
    </footer>
  </div>
</body>

</html>
```

FILE: styles.css
```css
* {
  box-sizing: border-box;
}

html,
body {
  margin: 0;
  height: 100%;
  overflow: hidden;
}

body {
  font-family: "Noto Sans", "Open Sans", sans-serif;
  font-size: 14.5px;
  color: #3c3b37;
  background-color: #edeae5;
}

.defs {
  position: absolute;
}

#window {
  width: 1607px;
  height: 872px;
  display: flex;
  flex-flow: column nowrap;
}

/* window title */
.titlebar {
  height: 30px;
  flex: none;
  display: flex;
  align-items: center;
  justify-content: center;
  position: relative;
  padding-bottom: 2px;
  background: linear-gradient(#5a574f, #3d3c37);
  border-top: 1px solid #6c695f;
}

.title {
  color: #dfdbd2;
  font-size: 14.800px;
  font-weight: 600;
}

.winbtns {
  position: absolute;
  right: 5.500px;
  top: 6px;
  display: flex;
  gap: 3px;
}

.winbtn {
  width: 17px;
  height: 17px;
  border-radius: 50%;
  background: linear-gradient(#85827a, #5c5a53);
  border: 1px solid #45443f;
  display: flex;
  align-items: center;
  justify-content: center;
}

.winbtn svg {
  flex: none;
}

.winbtn.close {
  background: linear-gradient(#f0673a, #d34a20);
}

/* menus */
.menubar {
  height: 22px;
  flex: none;
  display: flex;
  align-items: center;
  padding: 0 0 2px 2.500px;
  background-color: #edeae5;
  border-bottom: 1px solid #d3d0ca;
  color: #2b2a27;
}

.menu {
  padding: 0 7.500px;
}

/* toolbars */
.toolbar {
  height: 39px;
  flex: none;
  display: flex;
  align-items: center;
  background: linear-gradient(#f7f5f1, #efece7);
  border-bottom: 1px solid #b9b5ae;
}

.toolbar.second {
  border-bottom-width: 2px;
}

.handle {
  flex: none;
  width: 17px;
  height: 18px;
  background-image: radial-gradient(circle, #c4c1ba .8px, transparent 1px);
  background-size: 3px 3px;
  background-position: center;
  background-clip: content-box;
  padding: 0 5.500px;
}

.handle.first {
  width: 12.600px;
  padding: 0 3.500px;
}

.handle.narrow {
  width: 12px;
  padding: 0 3px;
}

.handle.tight {
  width: 15px;
  padding: 0 4.500px;
}

.tb {
  flex: none;
  width: 33px;
  height: 31px;
  display: flex;
  align-items: center;
  padding-left: 4.500px;
  gap: 4.500px;
  border: 1px solid transparent;
  border-width: 1px 0;
  color: #f3d435;
}

.tb svg {
  flex: none;
  width: 24px;
  height: 24px;
  overflow: visible;
}

.tb.drop {
  width: 45px;
}

.tb.drop.wide {
  width: 47px;
  padding-left: 8.500px;
}

.tb.pressed {
  background-color: #d6d3cd;
  border: 1px solid #aeaaa3;
  border-radius: 3px;
}

.tb.off svg,
.tb.off .tri {
  opacity: .35;
}

.tb.grey {
  color: #bdbab2;
}

.tri {
  display: block;
  flex: none;
  width: 0;
  height: 0;
  border-left: 4.500px solid transparent;
  border-right: 4.500px solid transparent;
  border-top: 5px solid #3f3e3a;
}

.tri.small {
  border-left-width: 3.500px;
  border-right-width: 3.500px;
  border-top-width: 4px;
  border-top-color: #555;
}

/* text that belongs inside the toolbar icons */
.glyph {
  font-family: "Liberation Sans", sans-serif;
  fill: #444;
}

.ilabel {
  font-family: "Liberation Sans", sans-serif;
  font-weight: 700;
  fill: #fff;
}

.ilabel.dark {
  fill: #333;
}

.tglyph {
  font-family: "Liberation Serif", serif;
  font-weight: 700;
  fill: #444;
}

.eps {
  font-family: "Liberation Serif", serif;
  fill: #7a2f78;
}

/* main area */
.main {
  flex: 1;
  min-height: 0;
  display: flex;
}

.side {
  width: 398px;
  flex: none;
  display: flex;
  flex-flow: column nowrap;
}

.panel {
  display: flex;
  flex-flow: column nowrap;
}

.browser {
  height: 386px;
  flex: none;
}

.layers {
  flex: 1;
  min-height: 0;
}

.dock-title {
  height: 20px;
  flex: none;
  display: flex;
  align-items: center;
  justify-content: space-between;
  padding: 0 2px 2px 4px;
}

.dock-btns {
  display: flex;
  gap: 3px;
}

.dock-btns svg {
  width: 11px;
  height: 11px;
}

.dock-tools {
  height: 30px;
  flex: none;
  display: flex;
  align-items: center;
  padding: 0 0 3px 3px;
}

.dt {
  flex: none;
  width: 25.200px;
  height: 16px;
  display: flex;
  align-items: center;
  justify-content: center;
}

.dt svg {
  width: 16px;
  height: 16px;
  flex: none;
  overflow: visible;
}

.dt.eye svg {
  width: 20px;
}

.dt.drop {
  width: 37px;
  gap: 5px;
  justify-content: flex-start;
  padding-left: 5px;
}

.tree {
  flex: 1;
  min-height: 0;
  background-color: #fff;
  border: 1px solid #b4b0a8;
  color: #111;
}

.row {
  height: 19px;
  display: flex;
  align-items: center;
  padding-bottom: 2px;
}

.arrow {
  flex: none;
  width: 0;
  height: 0;
  margin: 0 11px 0 6px;
  border-top: 5px solid transparent;
  border-bottom: 5px solid transparent;
  border-left: 6px solid #444;
}

.arrow.none {
  border-left-color: transparent;
}

.ti {
  flex: none;
  width: 16px;
  height: 16px;
  margin-right: 6px;
}

.splitter {
  height: 6px;
  flex: none;
  background-image: radial-gradient(circle, #c4c1ba .8px, transparent 1px);
  background-size: 3px 3px;
  background-repeat: repeat-x;
  background-position: center;
  background-clip: content-box;
  padding: 1px 191px;
}

.layer {
  height: 19px;
  display: flex;
  align-items: center;
  background-color: #308cc6;
  position: relative;
  padding-left: 23px;
}

.check {
  flex: none;
  width: 14px;
  height: 14px;
  background-color: #fff;
  border: 1px solid #9a968f;
  border-radius: 1px;
  display: flex;
}

.check svg {
  flex: none;
  width: 12px;
  height: 12px;
}

.swatch {
  flex: none;
  width: 16px;
  height: 16px;
  margin-left: 6px;
  background-color: #8f5670;
  border: 1px solid #5f6d80;
}

.lname {
  margin: 0 0 2px 6px;
  font-weight: 600;
  color: #d7ecfa;
  text-decoration: underline;
}

.lfilter {
  position: absolute;
  right: 2px;
  top: 2px;
  width: 15px;
  height: 15px;
}

.vsplit {
  width: 6px;
  flex: none;
  background-image: radial-gradient(circle, #c4c1ba .8px, transparent 1px);
  background-size: 3px 3px;
  background-repeat: repeat-y;
  background-position: center;
  background-clip: content-box;
  padding: 338px 1.500px 355px;
}

.canvas {
  flex: 1;
  min-width: 0;
  position: relative;
  background-color: #fff;
  border: 1px solid #b4b0a8;
}

/* polygon sits on the map canvas by its map position */
.map {
  position: absolute;
  left: 425px;
  top: 129px;
  width: 370px;
  height: 420px;
  overflow: visible;
}

/* status bar */
.statusbar {
  height: 31px;
  flex: none;
  display: flex;
  align-items: center;
  font-size: 12px;
  padding-left: 4px;
  color: #2f2e2b;
}

.locator {
  width: 273px;
  height: 24px;
  flex: none;
  display: flex;
  align-items: center;
  gap: 6px;
  padding: 0 0 2px 7px;
  background-color: #fff;
  border: 1px solid #b4b0a8;
  border-radius: 2px;
  font-size: 14.500px;
  color: #85837d;
}

.locator svg {
  width: 16px;
  height: 16px;
  flex: none;
}

.st {
  flex: none;
}

.lbl-coord {
  margin-left: 438px;
  width: 65px;
}

.field {
  flex: none;
  height: 24px;
  display: flex;
  align-items: center;
  background-color: #fff;
  border: 1px solid #b4b0a8;
  border-radius: 2px;
  padding-left: 3px;
  position: relative;
}

.coord {
  width: 90px;
  justify-content: center;
  padding: 0;
}

.sicon {
  flex: none;
  width: 16px;
  height: 16px;
}

.toggle {
  margin-left: 5px;
}

.lbl-scale {
  margin-left: 13px;
  width: 33px;
}

.combo {
  width: 95px;
}

.combo-btn {
  position: absolute;
  right: 0;
  top: 0;
  bottom: 0;
  width: 20px;
  border-left: 1px solid #b4b0a8;
  display: flex;
  align-items: center;
  justify-content: center;
}

.lock {
  margin-left: 11px;
}

.lbl-mag {
  margin-left: 7px;
  width: 57px;
}

.spin-btn {
  position: absolute;
  right: 0;
  top: 0;
  bottom: 0;
  width: 14px;
  border-left: 1px solid #d8d5cf;
  display: flex;
  flex-flow: column nowrap;
  align-items: center;
  justify-content: center;
  gap: 3px;
}

.spin-btn b {
  width: 0;
  height: 0;
  border-left: 3.500px solid transparent;
  border-right: 3.500px solid transparent;
}

.spin-btn .up {
  border-bottom: 4px solid #555;
}

.spin-btn .down {
  border-top: 4px solid #555;
}

.mag {
  width: 97px;
}

.lbl-rot {
  margin-left: 9px;
  width: 57px;
}

.rot {
  width: 94px;
}

.check.small {
  margin-left: 7px;
  width: 13px;
  height: 13px;
}

.check.small svg {
  width: 11px;
  height: 11px;
}

.lbl-render {
  margin-left: 6px;
  width: 58px;
}

.lbl-epsg {
  margin-left: 3px;
  width: 77px;
}

.grip {
  margin-left: 21px;
  flex: none;
  width: 12px;
  height: 12px;
  align-self: flex-end;
  background-image: radial-gradient(circle, #c4c1ba .8px, transparent 1px);
  background-size: 4px 4px;
}
```
